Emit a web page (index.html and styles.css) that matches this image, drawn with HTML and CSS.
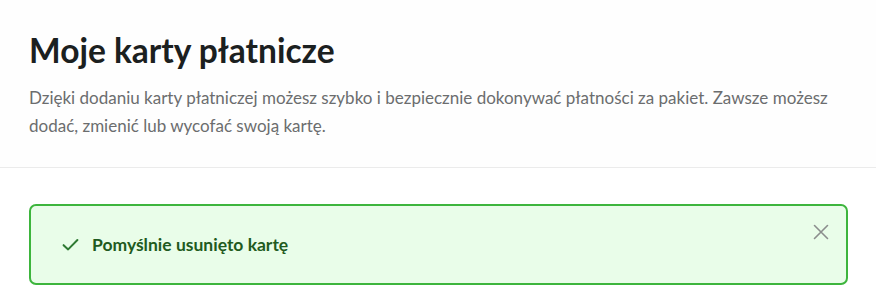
FILE: index.html
```html
<!DOCTYPE html>
<html lang="pl">
<head>
<meta charset="utf-8">
<title>Moje karty płatnicze</title>
<link rel="stylesheet" href="styles.css">
</head>
<body>
<header class="page-head">
  <h1 class="title">Moje karty płatnicze</h1>
  <p class="lead">Dzięki dodaniu karty płatniczej możesz szybko i bezpiecznie dokonywać płatności za pakiet. Zawsze możesz dodać, zmienić lub wycofać swoją kartę.</p>
</header>
<main class="content">
  <div class="alert" role="status">
    <svg class="alert-icon" viewBox="0 0 16 16" width="16" height="16" aria-hidden="true">
      <path d="M1.5 8.6 L5.8 12.6 L14.5 3.8" fill="none" stroke="currentColor" stroke-width="1.9" stroke-linecap="round" stroke-linejoin="round"/>
    </svg>
    <span class="alert-text">Pomyślnie usunięto kartę</span>
    <button class="alert-close" aria-label="Zamknij">
      <svg viewBox="0 0 16 16" width="16" height="16" aria-hidden="true">
        <path d="M1.5 1.5 L14.5 14.5 M14.5 1.5 L1.5 14.5" fill="none" stroke="currentColor" stroke-width="1.6" stroke-linecap="round"/>
      </svg>
    </button>
  </div>
</main>
</body>
</html>
```
FILE: styles.css
```css
* { box-sizing: border-box; }
html, body { margin: 0; padding: 0; background: #ffffff; }
body {
  font-family: Lato, "Noto Sans", "Liberation Sans", sans-serif;
  color: #1b2020;
}
.page-head {
  padding: 28px 29px 27px;
  border-bottom: 1px solid #ebebeb;
  background: #fefefe;
}
.title {
  margin: 0;
  font-size: 33.5px;
  line-height: 44px;
  font-weight: 700;
  color: #1b2020;
}
.lead {
  margin: 12px 0 0;
  font-size: 17px;
  line-height: 28px;
  color: #6b6d6e;
  max-width: 810px;
}
.content {
  padding: 36px 28px 0 29px;
}
.alert {
  position: relative;
  display: flex;
  align-items: center;
  gap: 13px;
  height: 81px;
  padding: 0 60px 0 31px;
  border: 2px solid #3db53d;
  border-radius: 7px;
  background: #e9fde9;
}
.alert-icon { color: #2f7a33; flex: none; width: 17px; height: 17px; }
.alert-text {
  font-size: 17.5px;
  font-weight: 700;
  color: #1f5a20;
}
.alert-close {
  position: absolute;
  top: 18px;
  right: 17px;
  padding: 0;
  border: 0;
  background: none;
  color: #8b8e8d;
  width: 16px;
  height: 16px;
  cursor: pointer;
}
.alert-close svg { display: block; width: 16px; height: 16px; }
```
